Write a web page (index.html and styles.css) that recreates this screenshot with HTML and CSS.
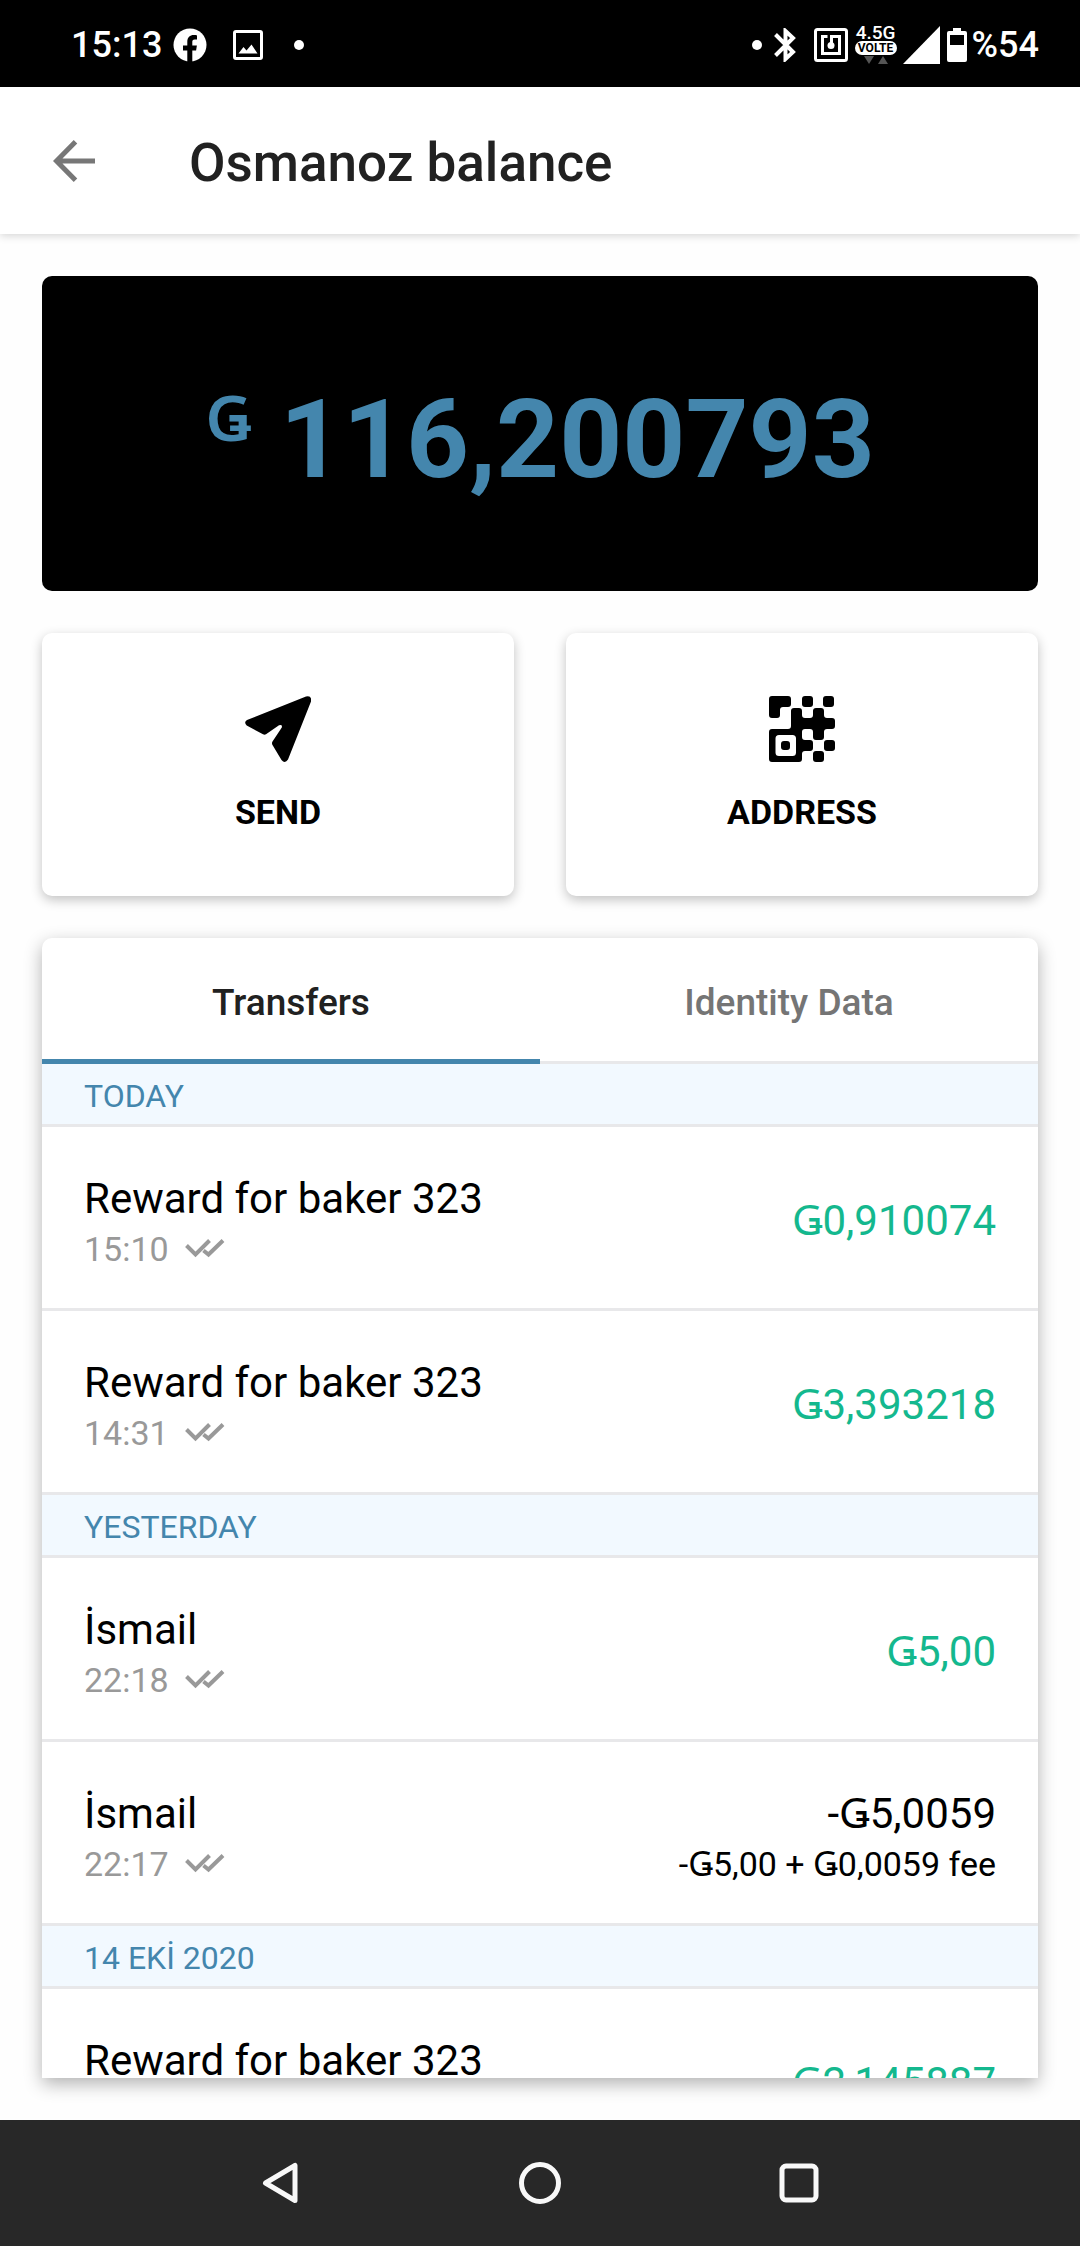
FILE: index.html
```html
<!DOCTYPE html>
<html lang="en">
<head>
<meta charset="utf-8">
<meta name="viewport" content="width=device-width, initial-scale=1">
<title>Osmanoz balance</title>
<link rel="stylesheet" href="styles.css">
</head>
<body>
<svg class="defs" aria-hidden="true">
  <symbol id="checks" viewBox="0 0 40 20"><path d="M1.5 6.5 10.5 15.5 24.5 1.5M18.5 11.5 23.5 15.5 38 1.5" fill="none" stroke="currentColor" stroke-width="4"/></symbol>
</svg>
<div class="app">
  <div class="status">
    <div class="status-left">
      <span>15:13</span>
      <svg class="fb" viewBox="0 0 34 34" width="34" height="34"><circle cx="17" cy="17" r="16.5" fill="#fff"/><path d="M14.3 34V22.500H10v-5h4.300v-3.700c0-4.300 2.600-6.700 6.500-6.700 1.300 0 2.700.2 3.200.3v4.200h-2.200c-2.100 0-2.500 1.100-2.500 2.500v3.400h4.600l-.8 5h-3.800V34z" fill="#000"/></svg>
      <svg class="photo" viewBox="0 0 30 30" width="30" height="30"><rect x="1.500" y="1.500" width="27" height="27" rx="1.500" fill="none" stroke="#fff" stroke-width="3"/><path d="M5.500 23.500l5-6.500 3 3.500 5-6 6 9z" fill="#fff"/></svg>
      <span class="dot"></span>
    </div>
    <div class="status-right">
      <span class="dot"></span>
      <svg class="bt" viewBox="0 0 24 34" width="24" height="34"><path d="M2.500 6.500 20 24 12.500 31V3L20 10 2.500 27.500" fill="none" stroke="#fff" stroke-width="4"/></svg>
      <svg class="nfc" viewBox="0 0 34 34" width="34" height="34"><rect x="1.500" y="1.500" width="31" height="31" rx="2" fill="none" stroke="#fff" stroke-width="3"/><path d="M13.500 8.500H8.500v17h17v-17h-8v7" fill="none" stroke="#fff" stroke-width="3"/><circle cx="17" cy="17.500" r="3.500" fill="#fff"/></svg>
      <span class="network">
        <span class="gen">4.5G</span>
        <span class="volte">VOLTE</span>
        <svg viewBox="0 0 42 9" width="42" height="9"><path d="M9 1h10l-5 8zM23 9h10l-5-8z" fill="#555"/></svg>
      </span>
      <svg class="signal" viewBox="0 0 37 38" width="37" height="38"><path d="M37 0v38H0z" fill="#fff"/></svg>
      <svg class="battery" viewBox="0 0 20 34" width="20" height="34"><path d="M6 0h8v3h4q2 0 2 2v27q0 2-2 2H2q-2 0-2-2V5q0-2 2-2h4z" fill="#fff"/><path d="M3 7h14v10H3z" fill="#000"/></svg>
      <span>%54</span>
    </div>
  </div>

  <header class="bar">
    <button class="back" aria-label="Back"><svg viewBox="0 0 42 42" width="42" height="42"><path d="M42 21H4M22.500 1.800 3.500 21l19 19.200" fill="none" stroke="#777" stroke-width="5"/></svg></button>
    <h1>Osmanoz balance</h1>
  </header>

  <main>
    <section class="balance"><span class="unit">Ǥ</span><span class="total">116,200793</span></section>

    <div class="actions">
      <button class="action">
        <svg viewBox="0 0 66 66" width="66" height="66"><path d="M2 24 61 .4q6-1.400 5 5L43 63.500q-3 4.500-6.500.5L27.500 49q-1-1.800 0-3.500l9.300-14q.8-3.500-2.800-2.300L21 38.200q-1.500.9-3 0L1.700 29.500Q-1.500 26 2 24z"/></svg>
        <span>SEND</span>
      </button>
      <button class="action">
        <svg viewBox="0 0 66 66" width="66" height="66"><path fill-rule="evenodd" d="M25 12h5q3 0 3 3v4q0 3 3 3h5q3 0 3-3v-4q0-3 3-3h5q3 0 3 3v4q0 3 3 3h5q3 0 3 3v5q0 3-3 3h-5q-3 0-3 3v5q0 3-3 3h-5q-3 0-3-3v-5q0-3-3-3h-5q-3 0-3 3v5q0 3 3 3h5q3 0 3 3v5q0 3-3 3h-5q-3 0-3 3v5q0 3-3 3H3q-3 0-3-3V36q0-3 3-3h16q3 0 3-3V15q0-3 3-3zM10 39q-3.500 0-3.500 3.500v14Q6.500 60 10 60h13.500q3.500 0 3.500-3.500v-14Q27 39 23.500 39z"/><rect x="12" y="45" width="9" height="9" rx="3"/><path d="M3 0h16q3 0 3 3v5q0 3-3 3h-5q-3 0-3 3v5q0 3-3 3H3q-3 0-3-3V3q0-3 3-3z"/><rect x="33" width="11" height="11" rx="3"/><rect x="54" width="11" height="11" rx="3"/><rect x="55" y="44" width="11" height="11" rx="3"/><rect x="44" y="55" width="11" height="11" rx="3"/></svg>
        <span>ADDRESS</span>
      </button>
    </div>

    <section class="card">
      <div class="tabs" role="tablist">
        <button class="tab active" role="tab" aria-selected="true">Transfers</button>
        <button class="tab" role="tab" aria-selected="false">Identity Data</button>
      </div>
      <div class="list">
        <h2>TODAY</h2>
        <div class="row">
          <div class="who"><p class="main">Reward for baker 323</p><p class="sub time">15:10 <svg width="40" height="20"><use href="#checks"/></svg></p></div>
          <p class="main plus">Ǥ0,910074</p>
        </div>
        <div class="row">
          <div class="who"><p class="main">Reward for baker 323</p><p class="sub time">14:31 <svg width="40" height="20"><use href="#checks"/></svg></p></div>
          <p class="main plus">Ǥ3,393218</p>
        </div>
        <h2>YESTERDAY</h2>
        <div class="row">
          <div class="who"><p class="main">İsmail</p><p class="sub time">22:18 <svg width="40" height="20"><use href="#checks"/></svg></p></div>
          <p class="main plus">Ǥ5,00</p>
        </div>
        <div class="row">
          <div class="who"><p class="main">İsmail</p><p class="sub time">22:17 <svg width="40" height="20"><use href="#checks"/></svg></p></div>
          <div class="amount"><p class="main">-Ǥ5,0059</p><p class="sub">-Ǥ5,00 + Ǥ0,0059 fee</p></div>
        </div>
        <h2>14 EKİ 2020</h2>
        <div class="row">
          <div class="who"><p class="main">Reward for baker 323</p></div>
          <p class="main plus">Ǥ2,145887</p>
        </div>
      </div>
    </section>
  </main>

  <nav class="nav">
    <button aria-label="Back"><svg viewBox="0 0 42 42" width="42" height="42"><path d="M35 3.500v35L5.500 21z" fill="none" stroke="#f8f8f8" stroke-width="5" stroke-linejoin="round"/></svg></button>
    <button aria-label="Home"><svg viewBox="0 0 42 42" width="42" height="42"><circle cx="21" cy="21" r="18.500" fill="none" stroke="#f8f8f8" stroke-width="5"/></svg></button>
    <button aria-label="Recent apps"><svg viewBox="0 0 42 42" width="42" height="42"><rect x="4" y="4" width="34" height="34" rx="4" fill="none" stroke="#f8f8f8" stroke-width="5"/></svg></button>
  </nav>
</div>
</body>
</html>
```
FILE: styles.css
```css
* { box-sizing: border-box; }
body { margin: 0; background: #fff; color: #000; font-family: Roboto, "Noto Sans", sans-serif; }
h1, h2, p { margin: 0; font-weight: 400; }
button { margin: 0; padding: 0; border: 0; background: none; font: inherit; color: inherit; }
svg { display: block; flex: none; }
.defs { display: none; }
.app { display: flex; flex-direction: column; height: 100vh; background: #fefefe; }

/* System status bar */
.status { flex: none; height: 87px; padding: 2px 41px 0 71px; display: flex; justify-content: space-between; align-items: center; background: #000; color: #fff; font-size: 36px; font-weight: 500; line-height: 42px; }
.status-left, .status-right { display: flex; align-items: center; }
.dot { width: 10px; height: 10px; border-radius: 50%; background: #fff; }
.fb { margin-left: 11px; }
.photo { margin: 0 31px 0 26px; }
.bt { margin: 0 17px 0 11px; }
.network { display: flex; flex-direction: column; align-items: center; width: 42px; margin: 0 6px 0 7px; }
.gen { font-size: 19px; line-height: 16px; }
.volte { width: 42px; border-radius: 7px; background: #fff; color: #000; font-size: 12px; font-weight: 700; line-height: 14px; text-align: center; }
.battery { margin: 0 5px 0 7px; }

/* App bar */
.bar { flex: none; height: 147px; padding-left: 53px; display: flex; align-items: center; background: #fff; box-shadow: 0 2px 8px rgba(0, 0, 0, .16); position: relative; }
.bar h1 { margin-left: 94px; padding-top: 4px; font-size: 53px; font-weight: 500; line-height: 62px; color: #212121; }

main { flex: 1; min-height: 0; padding: 42px; display: flex; flex-direction: column; gap: 42px; }

.balance { flex: none; height: 315px; display: flex; justify-content: center; align-items: flex-start; gap: 28px; padding-top: 94px; border-radius: 10px; background: #000; color: #4486ad; }
.unit { font-family: "Noto Sans", sans-serif; font-size: 64px; font-weight: 600; line-height: 94px; }
.total { font-size: 110px; font-weight: 700; line-height: 140px; }

.actions { flex: none; display: grid; grid-template-columns: 1fr 1fr; gap: 52px; }
.action { height: 263px; padding-bottom: 2px; display: flex; flex-direction: column; align-items: center; justify-content: center; gap: 30px; border-radius: 10px; background: #fff; box-shadow: 0 4px 12px rgba(0, 0, 0, .24); font-size: 34px; font-weight: 700; line-height: 40px; }

.card { flex: 1; min-height: 0; display: flex; flex-direction: column; border-radius: 10px 10px 0 0; background: #fff; box-shadow: 0 6px 18px rgba(0, 0, 0, .3); }
.tabs { flex: none; display: grid; grid-template-columns: 1fr 1fr; }
.tab { height: 126px; padding-top: 6px; border-bottom: 3px solid #e8e8ea; font-size: 37px; font-weight: 500; line-height: 44px; color: #757575; }
.tab.active { padding-top: 8px; border-bottom: 5px solid #4486ad; color: #212121; }

.list { flex: 1; min-height: 0; overflow-y: auto; scrollbar-width: none; }
.list h2 { padding: 8px 42px 4px; border-bottom: 3px solid #e8e8ea; background: #f2f9ff; color: #4486ad; font-size: 32px; line-height: 48px; }
.row { display: flex; justify-content: space-between; align-items: center; min-height: 184px; padding: 44px 42px 37px; border-bottom: 3px solid #e8e8ea; }
.who { align-self: flex-start; }
.main { font-size: 42px; line-height: 56px; }
.sub { font-size: 34px; line-height: 44px; }
.time { display: flex; align-items: center; gap: 16px; color: #999; }
.plus { color: #14b88e; }
.amount { text-align: right; }

/* System navigation */
.nav { flex: none; height: 126px; padding: 0 14%; display: grid; grid-template-columns: repeat(3, 1fr); background: #282828; }
.nav button { display: flex; align-items: center; justify-content: center; }
```
